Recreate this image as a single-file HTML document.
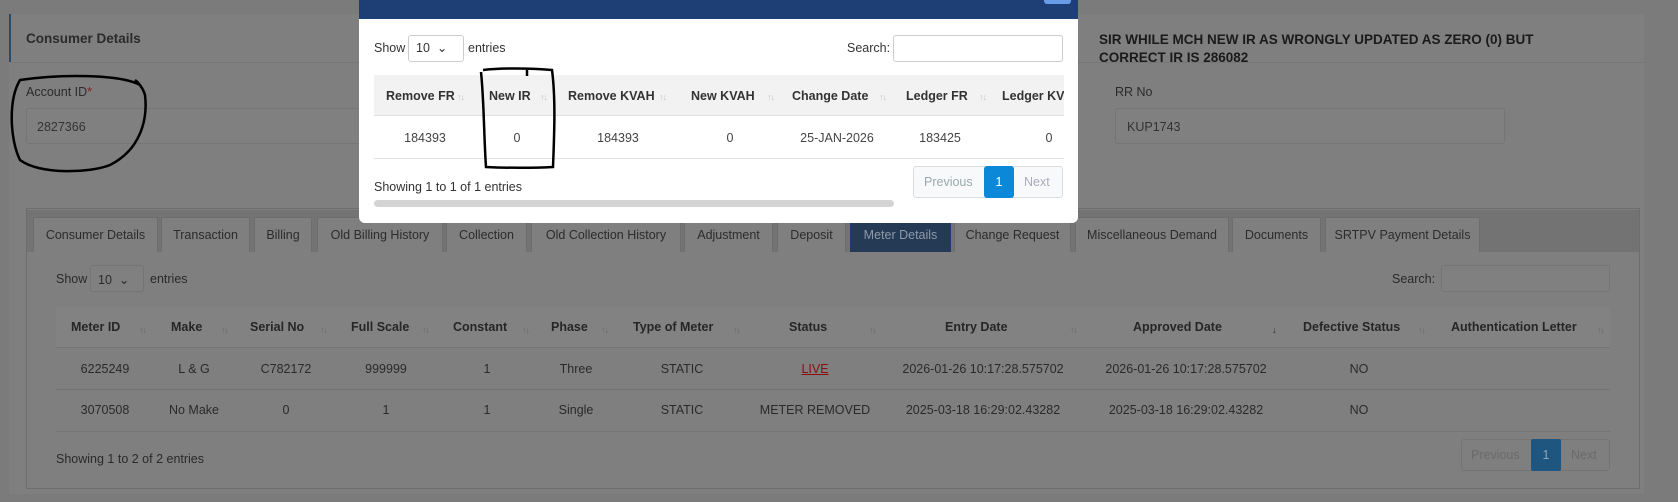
<!DOCTYPE html>
<html><head><meta charset="utf-8"><style>
*{box-sizing:border-box;margin:0;padding:0}
body{width:1678px;height:502px;overflow:hidden;background:#7b7b7b;font-family:"Liberation Sans",sans-serif;font-size:12.5px;color:#2a2a2a;position:relative}
.a{position:absolute;white-space:nowrap}
.inp{position:absolute;border:1px solid #757575;background:#808080;border-radius:3px}
.tab{position:absolute;top:217px;height:35px;background:#7f7f7f;border:1px solid #6d6d6d;border-bottom:none;line-height:34px;text-align:center;color:#2c2c2c;font-size:12.5px}
.th{position:absolute;top:320px;font-weight:bold;color:#262626}
.s{position:absolute;color:#6a6a6a;font-size:9px;letter-spacing:-1px}
.td{position:absolute;transform:translateX(-50%);color:#2a2a2a}
.mth{position:absolute;top:89px;font-weight:bold;color:#333}
.ms{position:absolute;top:92px;color:#c4c4c4;font-size:9px;letter-spacing:-1px}
.mtd{position:absolute;top:131px;transform:translateX(-50%);color:#444}
</style></head><body>
<!-- background cards -->
<div class="a" style="left:9px;top:14px;width:1635px;height:480px;background:#7f7f7f"></div>
<div class="a" style="left:9px;top:14px;width:2px;height:48px;background:#2a4a6a"></div>
<div class="a" style="left:11px;top:62px;width:1633px;height:1px;background:#767676"></div>
<div class="a" style="left:26px;top:31px;font-weight:bold;font-size:13.5px;color:#2b2b2b">Consumer Details</div>
<div class="a" style="left:1099px;top:31px;font-weight:bold;font-size:13.5px;color:#1a1a1a;line-height:18px">SIR WHILE MCH NEW IR AS WRONGLY UPDATED AS ZERO (0) BUT<br>CORRECT IR IS 286082</div>
<div class="a" style="left:26px;top:85px;color:#2b2b2b">Account ID<span style="color:#8a1a1a">*</span></div>
<div class="inp" style="left:26px;top:108px;width:400px;height:36px"></div>
<div class="a" style="left:37px;top:120px;color:#333">2827366</div>
<div class="a" style="left:1115px;top:85px;color:#2b2b2b">RR No</div>
<div class="inp" style="left:1115px;top:108px;width:390px;height:36px"></div>
<div class="a" style="left:1127px;top:120px;color:#333">KUP1743</div>

<!-- tabs panel -->
<div class="a" style="left:26px;top:208px;width:1614px;height:281px;border:1px solid #6e6e6e;background:#7f7f7f"></div>
<div class="a" style="left:27px;top:210px;width:1612px;height:42px;background:#737373"></div>
<div class="tab" style="left:33px;width:125px">Consumer Details</div>
<div class="tab" style="left:161px;width:89px">Transaction</div>
<div class="tab" style="left:254px;width:58px">Billing</div>
<div class="tab" style="left:317px;width:126px">Old Billing History</div>
<div class="tab" style="left:446px;width:81px">Collection</div>
<div class="tab" style="left:531px;width:150px">Old Collection History</div>
<div class="tab" style="left:684px;width:89px">Adjustment</div>
<div class="tab" style="left:777px;width:69px">Deposit</div>
<div class="tab" style="left:850px;width:101px;background:#243a55;color:#8e9aa8;border-color:#1f3a70">Meter Details</div>
<div class="tab" style="left:954px;width:117px">Change Request</div>
<div class="tab" style="left:1075px;width:154px">Miscellaneous Demand</div>
<div class="tab" style="left:1232px;width:89px">Documents</div>
<div class="tab" style="left:1325px;width:155px">SRTPV Payment Details</div>

<div class="a" style="left:56px;top:272px">Show</div>
<div class="inp" style="left:90px;top:265px;width:54px;height:27px"></div>
<div class="a" style="left:98px;top:272px">10 &nbsp;⌄</div>
<div class="a" style="left:150px;top:272px">entries</div>
<div class="a" style="left:1392px;top:272px">Search:</div>
<div class="inp" style="left:1441px;top:265px;width:169px;height:27px"></div>

<div class="a" style="left:56px;top:306px;width:1554px;height:42px;background:#828282;border-bottom:1px solid #747474"></div>
<div class="th" style="left:71px">Meter ID</div><div class="s" style="left:139px;top:325px">↑↓</div>
<div class="th" style="left:171px">Make</div><div class="s" style="left:221px;top:325px">↑↓</div>
<div class="th" style="left:250px">Serial No</div><div class="s" style="left:320px;top:325px">↑↓</div>
<div class="th" style="left:351px">Full Scale</div><div class="s" style="left:422px;top:325px">↑↓</div>
<div class="th" style="left:453px">Constant</div><div class="s" style="left:522px;top:325px">↑↓</div>
<div class="th" style="left:551px">Phase</div><div class="s" style="left:601px;top:325px">↑↓</div>
<div class="th" style="left:633px">Type of Meter</div><div class="s" style="left:733px;top:325px">↑↓</div>
<div class="th" style="left:789px">Status</div><div class="s" style="left:869px;top:325px">↑↓</div>
<div class="th" style="left:945px">Entry Date</div><div class="s" style="left:1070px;top:325px">↑↓</div>
<div class="th" style="left:1133px">Approved Date</div><div class="s" style="left:1272px;top:325px;color:#222">↓</div>
<div class="th" style="left:1303px">Defective Status</div><div class="s" style="left:1418px;top:325px">↑↓</div>
<div class="th" style="left:1451px">Authentication Letter</div><div class="s" style="left:1597px;top:325px">↑↓</div>

<div class="a" style="left:56px;top:389px;width:1554px;height:1px;background:#747474"></div>
<div class="a" style="left:56px;top:431px;width:1554px;height:1px;background:#747474"></div>
<div class="td" style="left:105px;top:362px">6225249</div>
<div class="td" style="left:194px;top:362px">L &amp; G</div>
<div class="td" style="left:286px;top:362px">C782172</div>
<div class="td" style="left:386px;top:362px">999999</div>
<div class="td" style="left:487px;top:362px">1</div>
<div class="td" style="left:576px;top:362px">Three</div>
<div class="td" style="left:682px;top:362px">STATIC</div>
<div class="td" style="left:815px;top:362px;color:#8a1010;text-decoration:underline">LIVE</div>
<div class="td" style="left:983px;top:362px">2026-01-26 10:17:28.575702</div>
<div class="td" style="left:1186px;top:362px">2026-01-26 10:17:28.575702</div>
<div class="td" style="left:1359px;top:362px">NO</div>
<div class="td" style="left:105px;top:403px">3070508</div>
<div class="td" style="left:194px;top:403px">No Make</div>
<div class="td" style="left:286px;top:403px">0</div>
<div class="td" style="left:386px;top:403px">1</div>
<div class="td" style="left:487px;top:403px">1</div>
<div class="td" style="left:576px;top:403px">Single</div>
<div class="td" style="left:682px;top:403px">STATIC</div>
<div class="td" style="left:815px;top:403px">METER REMOVED</div>
<div class="td" style="left:983px;top:403px">2025-03-18 16:29:02.43282</div>
<div class="td" style="left:1186px;top:403px">2025-03-18 16:29:02.43282</div>
<div class="td" style="left:1359px;top:403px">NO</div>

<div class="a" style="left:56px;top:452px">Showing 1 to 2 of 2 entries</div>
<div class="a" style="left:1461px;top:439px;width:149px;height:32px;border:1px solid #747474;border-radius:3px;background:#7f7f7f"></div>
<div class="a" style="left:1471px;top:448px;color:#6a6a6a">Previous</div>
<div class="a" style="left:1531px;top:439px;width:30px;height:32px;background:#1e5680;color:#8ca4b8;text-align:center;line-height:32px;border-radius:2px">1</div>
<div class="a" style="left:1571px;top:448px;color:#6a6a6a">Next</div>

<!-- modal -->
<div class="a" style="left:359px;top:-10px;width:719px;height:233px;background:#fff;border-radius:6px;overflow:hidden">
 <div class="a" style="left:0;top:0;width:719px;height:29px;background:#1e3f75"></div>
 <div class="a" style="left:685px;top:0;width:27px;height:14px;background:#6a9be8;border-radius:3px"></div>
</div>
<div class="a" style="left:359px;top:19px;width:719px;height:204px;overflow:hidden;color:#333">
 <div class="a" style="left:15px;top:22px">Show</div>
 <div class="a" style="left:49px;top:16px;width:56px;height:27px;border:1px solid #ccc;border-radius:3px"></div>
 <div class="a" style="left:57px;top:21px">10 &nbsp;⌄</div>
 <div class="a" style="left:109px;top:22px">entries</div>
 <div class="a" style="left:488px;top:22px">Search:</div>
 <div class="a" style="left:534px;top:16px;width:170px;height:27px;border:1px solid #ccc;border-radius:3px"></div>
 <div class="a" style="left:15px;top:56px;width:690px;height:41px;background:#f2f2f2;border-bottom:1px solid #e0e0e0"></div>
</div>
<div class="a" style="left:359px;top:0;width:705px;height:223px;overflow:hidden">
 <div class="mth" style="left:27px">Remove FR</div><div class="ms" style="left:98px">↑↓</div>
 <div class="mth" style="left:130px">New IR</div><div class="ms" style="left:181px">↑↓</div>
 <div class="mth" style="left:209px">Remove KVAH</div><div class="ms" style="left:300px">↑↓</div>
 <div class="mth" style="left:332px">New KVAH</div><div class="ms" style="left:408px">↑↓</div>
 <div class="mth" style="left:433px">Change Date</div><div class="ms" style="left:520px">↑↓</div>
 <div class="mth" style="left:547px">Ledger FR</div><div class="ms" style="left:620px">↑↓</div>
 <div class="mth" style="left:643px">Ledger KVAH</div>
 <div class="a" style="left:15px;top:158px;width:690px;height:1px;background:#e3e3e3"></div>
 <div class="mtd" style="left:66px">184393</div>
 <div class="mtd" style="left:158px">0</div>
 <div class="mtd" style="left:259px">184393</div>
 <div class="mtd" style="left:371px">0</div>
 <div class="mtd" style="left:478px">25-JAN-2026</div>
 <div class="mtd" style="left:581px">183425</div>
 <div class="mtd" style="left:690px">0</div>
 <div class="a" style="left:15px;top:180px;color:#333">Showing 1 to 1 of 1 entries</div>
 <div class="a" style="left:15px;top:200px;width:520px;height:7px;background:#d4d4d4;border-radius:4px"></div>
 <div class="a" style="left:554px;top:166px;width:150px;height:32px;border:1px solid #dcdcdc;border-radius:3px;background:#f8f9fa"></div>
 <div class="a" style="left:565px;top:175px;color:#9aa">Previous</div>
 <div class="a" style="left:625px;top:166px;width:30px;height:32px;background:#0b88d8;color:#fff;text-align:center;line-height:32px;border-radius:3px">1</div>
 <div class="a" style="left:665px;top:175px;color:#aab">Next</div>
</div>

<!-- hand drawn marks -->
<svg class="a" style="left:0;top:0" width="1678" height="502">
 <path d="M140,85 C120,74 60,74 20,80 C8,100 10,140 20,160 C40,175 90,173 110,165 C140,150 148,120 145,95 C143,88 138,82 135,80" fill="none" stroke="#000" stroke-width="2.5"/>
 <path d="M483,70 C500,68 530,68 552,70 C556,100 554,140 553,167 C535,168 505,168 486,167 C484,140 484,100 481,72 M527,68 L527,76" fill="none" stroke="#000" stroke-width="2.5"/>
</svg>
</body></html>
